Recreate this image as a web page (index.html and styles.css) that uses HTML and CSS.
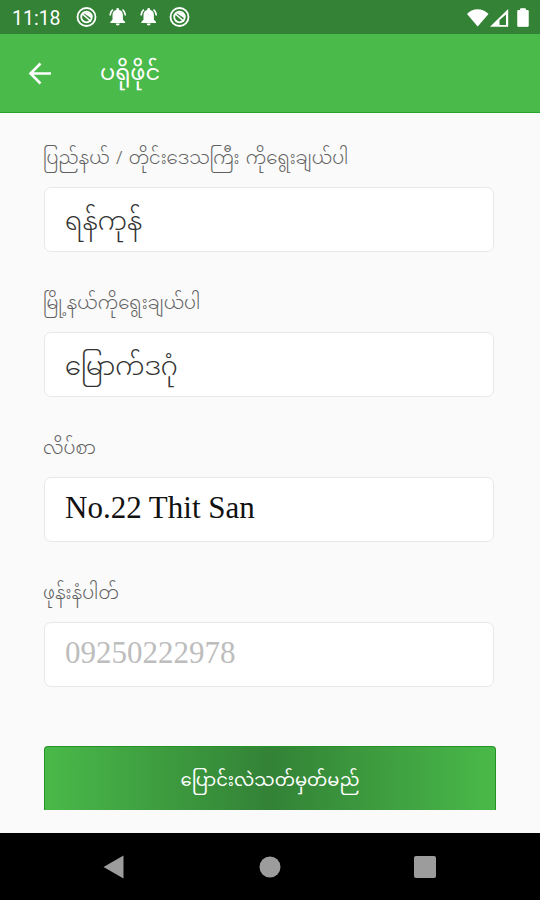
FILE: index.html
```
<!DOCTYPE html>
<html lang="my">
  <head>
    <meta charset="UTF-8" />
    <meta name="viewport" content="width=device-width, initial-scale=1.0" />
    <title>ပရိုဖိုင်</title>
    <link rel="stylesheet" href="styles.css">
  </head>
  <body>
    <div class="status-bar">
      <span class="time">11:18</span>
      <svg class="status-left" width="114" height="22" viewBox="0 0 114 22">
        <defs>
          <g id="blocked">
            <circle cx="10.5" cy="11" r="9" fill="none" stroke="#fff" stroke-width="1.8" />
            <circle cx="10.5" cy="11" r="5.3" fill="none" stroke="#fff" stroke-width="1.8" />
            <path d="M7.5 7 C10 5 15.5 6.5 15.6 12.5 Z" fill="#fff" />
            <path d="M6 7.5 L15 15.5" stroke="#fff" stroke-width="1.6" />
          </g>
          <g id="bell">
            <path d="M3.8 16 L6 13.8 V9 C6 6.2 7.6 4.6 9.8 4.1 V3.4 a1.4 1.4 0 0 1 2.8 0 V4.1 C14.8 4.6 16.4 6.2 16.4 9 V13.8 L18.6 16 V17 H3.8 Z" fill="#fff" />
            <path d="M9.2 17.6 h4 a2 2 0 0 1 -4 0 Z" fill="#fff" />
            <path d="M3.6 9.5 C3.7 7 4.6 5 6.4 3.7 M18.8 9.5 C18.7 7 17.8 5 16 3.7" fill="none" stroke="#fff" stroke-width="1.5" />
          </g>
        </defs>
        <use href="#blocked" />
        <use href="#bell" x="30.5" />
        <use href="#bell" x="61.5" />
        <use href="#blocked" x="93" />
      </svg>
      <svg class="status-right" width="66" height="22" viewBox="0 0 66 22">
        <path d="M3 8 C8 1.6 19 1.6 24.5 8 L13.7 20.5 Z" fill="#fff" />
        <path d="M26 20.8 L44.2 3 V20.8 Z M35.5 19 H42 V8.5 L35.5 14 Z" fill="#fff" fill-rule="evenodd" />
        <path d="M53.8 4.5 H56.5 V2.8 H61.5 V4.5 H64.2 V20.3 H53.8 Z" fill="#fff" stroke="#fff" stroke-linejoin="round" />
      </svg>
    </div>

    <header class="app-bar">
      <svg class="back" width="24" height="24" viewBox="0 0 24 24">
        <path d="M23 12.5 H2 M12.5 2.5 L2.5 12.5 L12.5 22.5" fill="none" stroke="#fff" stroke-width="2.6" />
      </svg>
      <h1>ပရိုဖိုင်</h1>
    </header>

    <main class="form">
      <div class="field">
        <label>ပြည်နယ် / တိုင်းဒေသကြီး ကိုရွေးချယ်ပါ</label>
        <div class="box select">ရန်ကုန်</div>
      </div>
      <div class="field">
        <label>မြို့နယ်ကိုရွေးချယ်ပါ</label>
        <div class="box select">မြောက်ဒဂုံ</div>
      </div>
      <div class="field">
        <label>လိပ်စာ</label>
        <div class="box">No.22 Thit San</div>
      </div>
      <div class="field">
        <label>ဖုန်းနံပါတ်</label>
        <div class="box disabled">09250222978</div>
      </div>
      <button class="submit">ပြောင်းလဲသတ်မှတ်မည်</button>
    </main>

    <nav class="nav-bar">
      <svg width="24" height="24" viewBox="0 0 24 24"><path d="M0.5 12 L20.5 0.5 V23.5 Z" fill="#9c9c9c" /></svg>
      <svg width="24" height="24" viewBox="0 0 24 24"><circle cx="12" cy="12" r="10.5" fill="#9c9c9c" /></svg>
      <svg width="24" height="24" viewBox="0 0 24 24"><rect x="1" y="1" width="22" height="22" rx="2" fill="#9c9c9c" /></svg>
    </nav>
  </body>
</html>
```
FILE: styles.css
```
* {
  box-sizing: border-box;
}

body {
  margin: 0;
  height: 900px;
  display: flex;
  flex-direction: column;
  background: #fafafa;
  font-family: "Noto Sans Myanmar", "Noto Sans", sans-serif;
  overflow: hidden;
}

.status-bar {
  height: 34px;
  display: flex;
  align-items: center;
  padding: 0 10px 0 12px;
  background: #338236;
  color: #fff;
}

.time {
  width: 64px;
  padding-top: 2px;
  font-family: Roboto, sans-serif;
  font-size: 19.5px;
}

.status-right {
  margin-left: auto;
}

.app-bar {
  height: 79px;
  display: flex;
  align-items: center;
  padding: 0 28px;
  background: #4aba4b;
  border-bottom: 1px solid #27a52b;
  color: #fff;
}

.app-bar h1 {
  margin: 0 0 0 48px;
  padding-top: 4px;
  font-size: 22.4px;
  font-weight: 400;
  line-height: 40px;
}

.form {
  height: 720px;
  padding: 32px 44px 0 43px;
}

.field {
  height: 145px;
}

label {
  display: block;
  height: 42px;
  line-height: 30px;
  font-size: 18.2px;
  font-weight: 300;
  color: #606060;
  white-space: nowrap;
  word-spacing: 1.6px;
}

.box {
  width: 450px;
  height: 65px;
  margin-left: 1px;
  padding: 0 20px;
  border: 1.5px solid #e8e8e8;
  border-radius: 7px;
  background: #fff;
  font-family: "Liberation Serif", serif;
  font-size: 31px;
  line-height: 60px;
  color: #111;
}

.select {
  padding-top: 6px;
  font-family: "Noto Sans Myanmar", "Noto Sans", sans-serif;
  font-size: 26px;
  font-weight: 300;
  color: #333;
}

.disabled {
  color: #bdbdbd;
}

.submit {
  display: block;
  width: 452px;
  height: 64px;
  margin: 21px 0 0 1px;
  padding: 5px 0 0;
  border: 1px solid #229426;
  border-bottom: none;
  border-radius: 4px 4px 0 0;
  background: linear-gradient(to right, #49b949, #338236 50%, #49b949);
  font-family: inherit;
  font-size: 18px;
  color: #fff;
}

.nav-bar {
  flex: 1;
  display: flex;
  justify-content: space-between;
  align-items: center;
  padding: 0 103px;
  background: #000;
}
```
